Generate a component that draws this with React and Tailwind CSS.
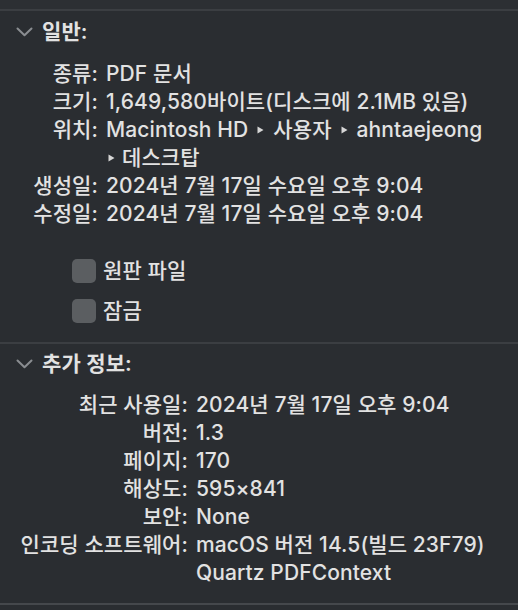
import React from "react";

function Chevron() {
  return (
    <svg width="17" height="10" viewBox="0 0 17 10" className="shrink-0">
      <polyline points="1.5,1.5 8.5,8.3 15.5,1.5" fill="none" stroke="#8a8d91" strokeWidth="2" strokeLinecap="round" strokeLinejoin="round" />
    </svg>
  );
}

function Tri({ cls = "mx-[9px]" }) {
  return (
    <svg width="7" height="8" viewBox="0 0 7 8" className={`inline-block ${cls} align-middle relative top-[-1px]`}>
      <polygon points="0.5,0.5 6.5,4 0.5,7.5" fill="#d6d6d6" />
    </svg>
  );
}

function Row({ label, children, lw }) {
  return (
    <div className="flex">
      <div className={`${lw} shrink-0 text-right`}>{label}</div>
      <div className="pl-2 whitespace-nowrap">{children}</div>
    </div>
  );
}

function Checkbox({ label }) {
  return (
    <div className="h-10 flex items-center pl-[72px]">
      <div className="w-6 h-6 rounded-[5px] bg-[#5b5e61]" />
      <span className="pl-[7px]">{label}</span>
    </div>
  );
}

export default function App() {
  return (
    <div className="w-[518px] h-[610px] overflow-hidden bg-[#2a2d31] text-[#e2e2e2] text-[21px] leading-[28px] tracking-[0.1px] font-medium font-[Inter,'Noto_Sans_CJK_KR',sans-serif]">
      <div className="h-[9px] bg-[#2c2f33]" />
      <div className="h-[2px] bg-[#3b3e42]" />

      <div className="pt-[7px] flex items-center gap-[9px] pl-[16px] font-semibold">
        <Chevron />
        <span>일반:</span>
      </div>

      <div className="mt-[14px]">
        <Row lw="w-[98px]" label="종류:">PDF 문서</Row>
        <Row lw="w-[98px]" label="크기:">1,649,580바이트(디스크에 2.1MB 있음)</Row>
        <Row lw="w-[98px]" label="위치:">
          Macintosh HD<Tri />사용자<Tri />ahntaejeong
        </Row>
        <Row lw="w-[98px]" label="">
          <Tri cls="ml-[2px] mr-[7px]" />데스크탑
        </Row>
        <Row lw="w-[98px]" label="생성일:">2024년 7월 17일 수요일 오후 9:04</Row>
        <Row lw="w-[98px]" label="수정일:">2024년 7월 17일 수요일 오후 9:04</Row>
      </div>

      <div className="mt-[23px]">
        <Checkbox label="원판 파일" />
        <Checkbox label="잠금" />
      </div>

      <div className="mt-[11px] h-[2px] bg-[#3b3e42]" />

      <div className="pt-[6px] flex items-center gap-[9px] pl-[16px] font-semibold">
        <Chevron />
        <span>추가 정보:</span>
      </div>

      <div className="mt-[13px]">
        <Row lw="w-[188px]" label="최근 사용일:">2024년 7월 17일 오후 9:04</Row>
        <Row lw="w-[188px]" label="버전:">1.3</Row>
        <Row lw="w-[188px]" label="페이지:">170</Row>
        <Row lw="w-[188px]" label="해상도:">595×841</Row>
        <Row lw="w-[188px]" label="보안:">None</Row>
        <Row lw="w-[188px]" label="인코딩 소프트웨어:">macOS 버전 14.5(빌드 23F79)</Row>
        <Row lw="w-[188px]" label="">Quartz PDFContext</Row>
      </div>

      <div className="mt-[16px] h-[2px] bg-[#45484c]" />
    </div>
  );
}
